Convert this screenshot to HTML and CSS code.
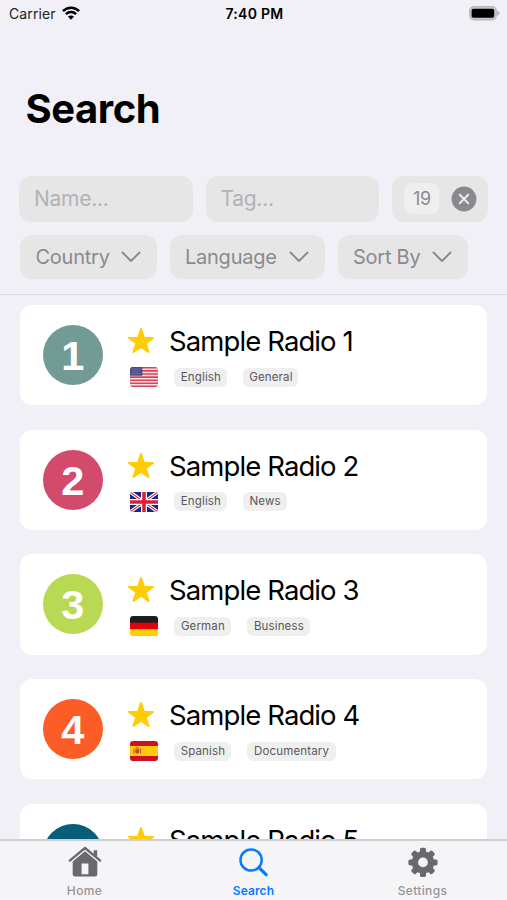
FILE: index.html
```html
<!DOCTYPE html>
<html lang="en">
<head>
<meta charset="utf-8">
<title>Search</title>
<link rel="stylesheet" href="styles.css">
</head>
<body>
<svg class="defs" aria-hidden="true">
  <symbol id="star" viewBox="0 0 28 28"><path d="M14 2 L16.9 10.8 L26 10.9 L18.7 16.3 L21.6 25 L14 19.7 L6.4 25 L9.3 16.3 L2 10.9 L11.1 10.8 Z" fill="#ffcc05" stroke="#ffcc05" stroke-width="2" stroke-linejoin="round"/></symbol>
  <symbol id="chevron" viewBox="0 0 20 12"><path d="M1.5 1.5 L10 10 L18.5 1.5" fill="none" stroke="#8a8a8e" stroke-width="1.9" stroke-linecap="round" stroke-linejoin="round"/></symbol>
</svg>
<div class="screen">
  <header class="status">
    <div class="carrier"><span>Carrier</span>
      <svg width="18" height="14" viewBox="0 0 18 14"><g fill="none" stroke="#000" stroke-width="2.5"><path d="M.9 5.1 C5.4 .5 12.6 .5 17.1 5.1"/><path d="M3.9 8.2 C6.8 5.4 11.2 5.4 14.1 8.2"/></g><path d="M9 13.7 L5.9 10.6 C7.6 9.1 10.4 9.1 12.1 10.6 Z"/></svg>
    </div>
    <div class="time">7:40 PM</div>
    <svg class="battery" width="31" height="15" viewBox="0 0 31 15"><rect x=".8" y=".8" width="26.4" height="13" rx="4" fill="#c9c9cd" stroke="#b9b9bd" stroke-width="1.4"/><rect x="2.6" y="2.7" width="22.6" height="9.1" rx="1.8"/><path d="M28.2 4.8 Q30.5 5.6 30.5 7.2 Q30.5 8.8 28.2 9.6 Z" fill="#b3b3b7"/></svg>
  </header>
  <h1>Search</h1>
  <section class="filters">
    <div class="row inputs">
      <div class="field">Name...</div>
      <div class="field">Tag...</div>
      <div class="field count"><span class="num">19</span>
        <svg width="26" height="26" viewBox="0 0 26 26"><circle cx="13" cy="13" r="12.4" fill="#8a8a8e"/><path d="M8.8 8.8 L17.2 17.2 M17.2 8.8 L8.8 17.2" stroke="#ececee" stroke-width="2" stroke-linecap="round"/></svg>
      </div>
    </div>
    <div class="row menus">
      <div class="menu country"><span>Country</span><svg width="20" height="12"><use href="#chevron"/></svg></div>
      <div class="menu language"><span>Language</span><svg width="20" height="12"><use href="#chevron"/></svg></div>
      <div class="menu sort"><span>Sort By</span><svg width="20" height="12"><use href="#chevron"/></svg></div>
    </div>
  </section>
  <main class="list">
    <article class="card">
      <div class="disc teal">1</div>
      <div class="info">
        <div class="head"><svg class="star"><use href="#star"/></svg><span class="name">Sample Radio 1</span></div>
        <div class="meta">
          <svg class="flag" viewBox="0 0 28 20"><rect width="28" height="20" fill="#f6dfe3"/><path d="M0 .8H28M0 3.9H28M0 7H28M0 10.1H28M0 13.2H28M0 16.3H28M0 19.3H28" stroke="#d6475d" stroke-width="1.6"/><rect width="12.3" height="8.7" fill="#474a87"/><path d="M1.5 2H11M2.5 4.3H10.5M1.5 6.6H11" stroke="#a9abc9" stroke-width=".8" stroke-dasharray="1 1"/></svg>
          <span class="tag w53">English</span><span class="tag w55">General</span>
        </div>
      </div>
    </article>
    <article class="card">
      <div class="disc rose">2</div>
      <div class="info">
        <div class="head"><svg class="star"><use href="#star"/></svg><span class="name">Sample Radio 2</span></div>
        <div class="meta">
          <svg class="flag" viewBox="0 0 28 20"><rect width="28" height="20" fill="#1c2582"/><path d="M0 0L28 20M28 0L0 20" stroke="#fff" stroke-width="3.4"/><path d="M0 0L28 20M28 0L0 20" stroke="#d8354d" stroke-width="1.1"/><path d="M14 0V20M0 10H28" stroke="#fff" stroke-width="6"/><path d="M14 0V20M0 10H28" stroke="#dc1d3c" stroke-width="3.6"/></svg>
          <span class="tag w53">English</span><span class="tag w44">News</span>
        </div>
      </div>
    </article>
    <article class="card">
      <div class="disc lime">3</div>
      <div class="info">
        <div class="head"><svg class="star"><use href="#star"/></svg><span class="name">Sample Radio 3</span></div>
        <div class="meta">
          <svg class="flag" viewBox="0 0 28 20"><rect width="28" height="7" fill="#1d1d1f"/><rect y="6.7" width="28" height="6.8" fill="#e3000b"/><rect y="13.4" width="28" height="6.6" fill="#ffcc05"/></svg>
          <span class="tag w57">German</span><span class="tag w63">Business</span>
        </div>
      </div>
    </article>
    <article class="card">
      <div class="disc orange">4</div>
      <div class="info">
        <div class="head"><svg class="star"><use href="#star"/></svg><span class="name">Sample Radio 4</span></div>
        <div class="meta">
          <svg class="flag" viewBox="0 0 28 20"><rect width="28" height="20" fill="#cf1020"/><rect y="5" width="28" height="10" fill="#ffca0a"/><path d="M4 7.5V12.5M10.5 7.5V12.5" stroke="#b8581c" stroke-width="1"/><path d="M5.3 8.3H9.2V11.5Q7.2 13.5 5.3 11.5Z" fill="#c5442a"/><path d="M5.6 7H9" stroke="#aa4520" stroke-width="1.2"/></svg>
          <span class="tag w57">Spanish</span><span class="tag w88">Documentary</span>
        </div>
      </div>
    </article>
    <article class="card">
      <div class="disc petrol">5</div>
      <div class="info">
        <div class="head"><svg class="star"><use href="#star"/></svg><span class="name">Sample Radio 5</span></div>
      </div>
    </article>
  </main>
  <nav class="tabs">
    <div class="tab"><svg width="34" height="32" viewBox="0 0 34 32"><path d="M1.8 14.6 L17 2 L32.2 14.6" fill="none" stroke="#69696b" stroke-width="2.3" stroke-linecap="round" stroke-linejoin="round"/><path d="M25.7 4.2H29.2V11.3L25.7 8.3Z" fill="#69696b"/><path fill-rule="evenodd" d="M17 5.3 L29.3 15.5 V28.2 Q29.3 30.6 27 30.6 H7 Q4.7 30.6 4.7 28.2 V15.5 Z M13.6 17.6 V28.2 H20.4 V17.6 Z" fill="#69696b"/></svg><span>Home</span></div>
    <div class="tab active"><svg width="34" height="32" viewBox="0 0 34 32"><circle cx="14.1" cy="14" r="10.6" fill="none" stroke="#0a7aff" stroke-width="2.5"/><path d="M21.8 21.5 L29.2 28.7" stroke="#0a7aff" stroke-width="3.2" stroke-linecap="round"/></svg><span>Search</span></div>
    <div class="tab"><svg width="34" height="32" viewBox="-17 -16.4 34 32"><g fill="#69696b"><path fill-rule="evenodd" d="M0-11.2A11.2 11.2 0 1 0 0 11.2A11.2 11.2 0 1 0 0-11.2ZM0-4.9A4.9 4.9 0 1 1 0 4.9A4.9 4.9 0 1 1 0-4.9Z"/><g id="teeth"><rect x="-3" y="-14.6" width="6" height="6" rx="1.6"/><rect x="-3" y="8.6" width="6" height="6" rx="1.6"/><rect x="-14.6" y="-3" width="6" height="6" rx="1.6"/><rect x="8.6" y="-3" width="6" height="6" rx="1.6"/></g><use href="#teeth" transform="rotate(45)"/></g></svg><span>Settings</span></div>
  </nav>
</div>
</body>
</html>
```
FILE: styles.css
```css
* { box-sizing: border-box; }
body { margin: 0; background: #f1f0f6; font-family: Inter, sans-serif; color: #000; }
svg { display: block; flex: none; }
.defs { position: absolute; width: 0; height: 0; }
.screen { height: 900px; display: flex; flex-direction: column; overflow: hidden; }
.status { height: 27px; flex: none; display: grid; grid-template-columns: 1fr auto 1fr; align-items: center; padding: 0 7px 0 9px; font-size: 14px; }
.carrier { display: flex; gap: 6px; align-items: center; color: #222; letter-spacing: .1px; }
.carrier svg { margin-top: -2px; }
.time { font-weight: 600; letter-spacing: .3px; }
.battery { justify-self: end; margin-top: -1px; }
h1 { margin: 58px 0 0 25.5px; height: 48px; line-height: 48px; font-size: 40px; font-weight: 700; letter-spacing: -.45px; flex: none; }
.filters { flex: none; height: 162px; padding: 43px 0 0 19.4px; border-bottom: 1px solid #dddde3; }
.row { display: flex; gap: 13px; }
.field { width: 173.5px; height: 45.5px; border-radius: 12px; background: #e6e6e7; padding-left: 14.5px; font-size: 21px; line-height: 45px; color: #b2b2b5; letter-spacing: -.25px; }
.count { width: 95.5px; display: flex; align-items: center; padding: 0 11px 0 12px; justify-content: space-between; }
.num { width: 35px; height: 31px; border-radius: 8px; background: #efefef; font-size: 18px; line-height: 31px; color: #8a8a8e; text-align: center; }
.menus { margin-top: 13.5px; padding-left: 1px; }
.menu { height: 44px; border-radius: 12px; background: #e6e6e7; display: flex; align-items: center; justify-content: space-between; padding: 0 16px 0 15px; font-size: 20px; color: #8a8a8e; letter-spacing: -.22px; }
.country { width: 136.5px; }
.language { width: 155px; }
.sort { width: 130px; }
.list { flex: 1; min-height: 0; overflow: hidden; padding: 10px 19.6px 0 20.4px; }
.card { height: 100.4px; margin-bottom: 24.3px; border-radius: 12px; background: #fff; display: flex; padding-left: 22.5px; }
.disc { width: 60px; height: 60px; margin-top: 20px; border-radius: 50%; color: #fff; font: 700 41.5px/61px "Liberation Sans", sans-serif; text-align: center; flex: none; }
.teal { background: #729b95; }
.rose { background: #d34b6c; }
.lime { background: #b9d954; }
.orange { background: #fc5c26; }
.petrol { background: #075e78; }
.info { margin-left: 24.5px; padding-top: 19px; }
.head { display: flex; align-items: center; height: 34px; }
.star { width: 28px; height: 28px; }
.name { margin-left: 13.7px; font-size: 27.5px; line-height: 34px; letter-spacing: -.9px; white-space: nowrap; }
.meta { display: flex; align-items: center; height: 20px; margin-top: 9px; padding-left: 2.5px; }
.flag { width: 28px; height: 20px; border-radius: 3px; margin-right: 16.5px; }
.tag { height: 19px; border-radius: 6px; background: #efefef; font-size: 11.5px; line-height: 19px; color: #58585a; text-align: center; letter-spacing: .15px; margin-right: 16px; white-space: nowrap; }
.w44 { width: 43.5px; }
.w53 { width: 53px; }
.w55 { width: 55px; }
.w57 { width: 57px; }
.w63 { width: 63px; }
.w88 { width: 88.5px; }
.tabs { flex: none; height: 61px; border-top: 2px solid #cfcfd3; background: #f5f5f7; display: grid; grid-template-columns: repeat(3, 1fr); }
.tab { display: flex; flex-direction: column; align-items: center; padding-top: 5px; color: #949497; font-size: 12px; font-weight: 500; letter-spacing: .35px; line-height: 16px; }
.tab span { margin-top: 5px; }
.active { color: #0a7aff; font-weight: 600; letter-spacing: .1px; }
```
